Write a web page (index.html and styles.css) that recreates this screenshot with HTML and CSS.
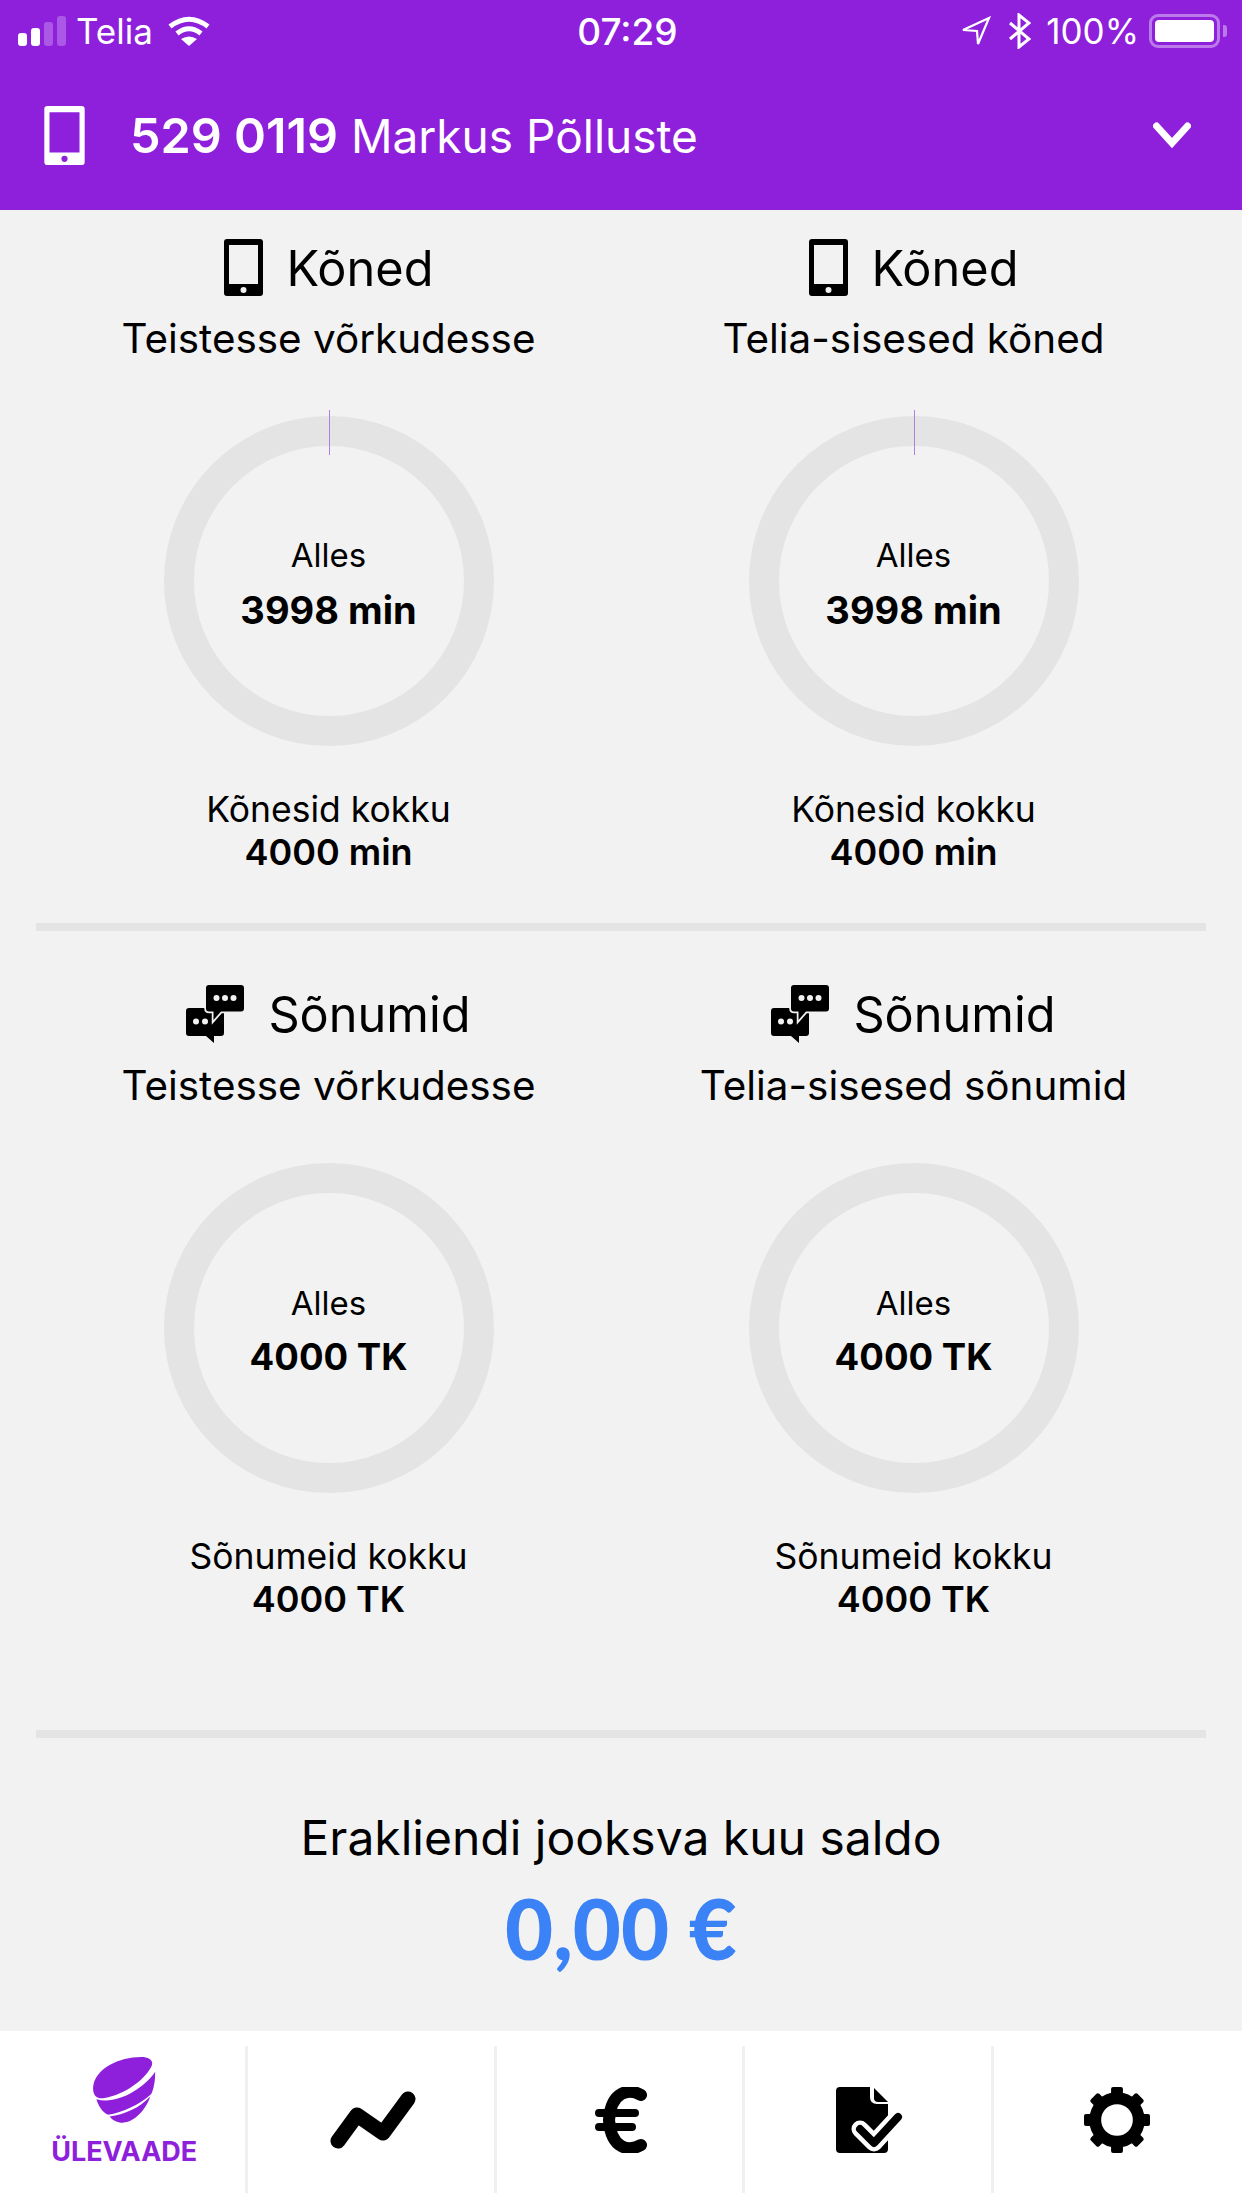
FILE: index.html
```html
<!DOCTYPE html>
<html lang="en">
<head>
  <meta charset="UTF-8" />
  <meta name="viewport" content="width=device-width, initial-scale=1" />
  <title>Ülevaade</title>
  <link rel="stylesheet" href="styles.css">
</head>
<body>
  <svg class="defs" width="0" height="0">
    <symbol id="phone" viewBox="0 0 39 57">
      <path fill-rule="evenodd" d="M3 0H36Q39 0 39 3V54Q39 57 36 57H3Q0 57 0 54V3Q0 0 3 0ZM5 6V45H34V6ZM19.500 48A3 3 0 1 0 19.500 54A3 3 0 1 0 19.500 48Z"/>
    </symbol>
    <symbol id="chat" viewBox="0 0 58 58">
      <path d="M3 23H35Q38 23 38 26V48Q38 51 35 51H28V58L20 51H3Q0 51 0 48V26Q0 23 3 23Z"/>
      <path d="M23 0H55Q58 0 58 3V23.500Q58 26.500 55 26.500H35L27.500 35V26.500H23Q20 26.500 20 23.500V3Q20 0 23 0Z" stroke="#f2f2f2" stroke-width="3.500" paint-order="stroke"/>
      <g fill="#f2f2f2">
        <circle cx="30.500" cy="13" r="3"/><circle cx="39" cy="13" r="3"/><circle cx="47.500" cy="13" r="3"/>
        <circle cx="10" cy="36.500" r="3"/><circle cx="19" cy="36.500" r="3"/>
      </g>
    </symbol>
  </svg>

  <header class="top">
    <div class="status">
      <div class="status-left">
        <div class="signal">
          <span class="bar b1"></span><span class="bar b2"></span><span class="bar b3 dim"></span><span class="bar b4 dim"></span>
        </div>
        <span class="carrier">Telia</span>
        <svg class="wifi" width="42" height="30" viewBox="0 0 42 30" fill="none" stroke="#fff">
          <path d="M2 10.500Q21 -4 40 10.500" stroke-width="5"/>
          <path d="M9 17.500Q21 8 33 17.500" stroke-width="5"/>
          <path d="M21 30L13 23Q21 18 29 23Z" fill="#fff" stroke="none"/>
        </svg>
      </div>
      <div class="clock">07:29</div>
      <div class="status-right">
        <svg class="loc" width="30" height="30" viewBox="0 0 30 30" fill="none" stroke="#fff" stroke-width="2.200">
          <path d="M2 14L28 2L17 28L16 15Z"/>
        </svg>
        <svg class="bt" width="22" height="36" viewBox="0 0 22 36" fill="none" stroke="#fff" stroke-width="3">
          <path d="M1 10L20 26L10 34V2L20 10L1 26"/>
        </svg>
        <span class="pct">100%</span>
        <div class="battery"><span class="cell"></span></div>
        <span class="nub"></span>
      </div>
    </div>
    <div class="account">
      <svg class="account-icon" width="41" height="59" fill="#fff"><use href="#phone"/></svg>
      <div class="account-name"><b>529 0119</b> Markus Põlluste</div>
      <svg class="chevron" width="38" height="27" viewBox="0 0 38 27" fill="none" stroke="#fff" stroke-width="7" stroke-linecap="round" stroke-linejoin="miter">
        <path d="M3.500 4L19 21L34.500 4"/>
      </svg>
    </div>
  </header>

  <main class="content">
    <section class="usage first">
      <div class="meter">
        <h2 class="meter-title"><svg width="39" height="57"><use href="#phone"/></svg>Kõned</h2>
        <p class="meter-sub">Teistesse võrkudesse</p>
        <div class="ring">
          <span class="tick"></span>
          <span class="left-label">Alles</span>
          <span class="left-value">3998 min</span>
        </div>
        <p class="total-label">Kõnesid kokku</p>
        <p class="total-value">4000 min</p>
      </div>
      <div class="meter">
        <h2 class="meter-title"><svg width="39" height="57"><use href="#phone"/></svg>Kõned</h2>
        <p class="meter-sub">Telia-sisesed kõned</p>
        <div class="ring">
          <span class="tick"></span>
          <span class="left-label">Alles</span>
          <span class="left-value">3998 min</span>
        </div>
        <p class="total-label">Kõnesid kokku</p>
        <p class="total-value">4000 min</p>
      </div>
    </section>

    <section class="usage">
      <div class="meter">
        <h2 class="meter-title"><svg width="58" height="58"><use href="#chat"/></svg>Sõnumid</h2>
        <p class="meter-sub">Teistesse võrkudesse</p>
        <div class="ring">
          <span class="left-label">Alles</span>
          <span class="left-value tk">4000 TK</span>
        </div>
        <p class="total-label">Sõnumeid kokku</p>
        <p class="total-value">4000 TK</p>
      </div>
      <div class="meter">
        <h2 class="meter-title"><svg width="58" height="58"><use href="#chat"/></svg>Sõnumid</h2>
        <p class="meter-sub">Telia-sisesed sõnumid</p>
        <div class="ring">
          <span class="left-label">Alles</span>
          <span class="left-value tk">4000 TK</span>
        </div>
        <p class="total-label">Sõnumeid kokku</p>
        <p class="total-value">4000 TK</p>
      </div>
    </section>

    <section class="balance">
      <p class="balance-label">Erakliendi jooksva kuu saldo</p>
      <p class="balance-value">0,00 €</p>
    </section>
  </main>

  <nav class="tabs">
    <div class="tab active">
      <svg width="63" height="66" viewBox="280 80 190 200" fill="#8e20dc">
        <path d="M280 170C285 115 360 80 425 80C450 80 462 90 458 105C445 140 380 195 310 205C290 207 278 195 280 170Z"/>
        <path d="M290 208C350 225 430 180 468 125C468 150 465 175 456 192C420 225 370 248 325 255C305 245 295 225 290 208Z"/>
        <path d="M330 260C375 255 420 235 453 200C440 240 405 278 370 279C352 279 340 272 330 260Z"/>
      </svg>
      <span class="tab-label">ÜLEVAADE</span>
    </div>
    <div class="tab">
      <svg width="86" height="58" viewBox="0 0 86 58" fill="none" stroke="#000" stroke-width="15" stroke-linecap="round" stroke-linejoin="round">
        <path d="M8 50L27 24L53 42L78 8"/>
      </svg>
    </div>
    <div class="tab">
      <svg width="52" height="66" viewBox="0 0 52 66" fill="none" stroke="#000" stroke-linecap="round">
        <path d="M46 8C34 1 16 4 14 33C16 62 34 65 46 58" stroke-width="12"/>
        <path d="M4 26H40M4 40H37" stroke-width="8"/>
      </svg>
    </div>
    <div class="tab">
      <svg width="67" height="66" viewBox="0 0 67 66" fill="none">
        <path fill="#000" d="M4 0H34V10Q34 17 41 17H52V62Q52 66 48 66H4Q0 66 0 62V4Q0 0 4 0Z"/>
        <path fill="#000" d="M38 1L52 15H42Q38 15 38 11Z"/>
        <path d="M24 42L38 56L62 30" stroke="#fff" stroke-width="17" stroke-linecap="round" stroke-linejoin="round"/>
        <path d="M24 42L38 56L62 30" stroke="#000" stroke-width="8" stroke-linecap="round" stroke-linejoin="round"/>
      </svg>
    </div>
    <div class="tab">
      <svg width="66" height="66" viewBox="0 0 100 100">
        <circle cx="50" cy="50" r="33" fill="none" stroke="#000" stroke-width="18"/>
        <g fill="#000">
          <rect x="41" y="0" width="18" height="20" rx="3"/>
          <rect x="41" y="0" width="18" height="20" rx="3" transform="rotate(45 50 50)"/>
          <rect x="41" y="0" width="18" height="20" rx="3" transform="rotate(90 50 50)"/>
          <rect x="41" y="0" width="18" height="20" rx="3" transform="rotate(135 50 50)"/>
          <rect x="41" y="0" width="18" height="20" rx="3" transform="rotate(180 50 50)"/>
          <rect x="41" y="0" width="18" height="20" rx="3" transform="rotate(225 50 50)"/>
          <rect x="41" y="0" width="18" height="20" rx="3" transform="rotate(270 50 50)"/>
          <rect x="41" y="0" width="18" height="20" rx="3" transform="rotate(315 50 50)"/>
        </g>
      </svg>
    </div>
  </nav>
</body>
</html>
```

FILE: styles.css
```css
* {
  box-sizing: border-box;
}

body {
  margin: 0;
  width: 1242px;
  height: 2208px;
  display: flex;
  flex-direction: column;
  font-family: 'Inter', 'Liberation Sans', sans-serif;
  background: #f2f2f2;
  color: #000;
  overflow: hidden;
}

.defs {
  position: absolute;
}

p,
h2 {
  margin: 0;
}

.top {
  height: 210px;
  background: #8e20dc;
  color: #fff;
  flex-shrink: 0;
}

.status {
  height: 62px;
  display: grid;
  grid-template-columns: 1fr auto 1fr;
  align-items: center;
  padding: 0 15px 0 18px;
  font-size: 35px;
}

.status-left,
.status-right {
  display: flex;
  align-items: center;
}

.status-right {
  justify-content: flex-end;
}

.signal {
  display: flex;
  align-items: flex-end;
  gap: 4px;
  height: 30px;
}

.bar {
  width: 9px;
  background: #fff;
  border-radius: 3px;
}

.bar.dim {
  opacity: 0.25;
}

.b1 { height: 13px; }
.b2 { height: 18px; }
.b3 { height: 24px; }
.b4 { height: 30px; }

.carrier {
  margin-left: 10px;
}

.wifi {
  margin-left: 15px;
}

.clock {
  font-size: 37px;
  font-weight: 500;
  margin-left: 10px;
}

.bt {
  margin-left: 18px;
}

.pct {
  margin-left: 15px;
}

.battery {
  margin-left: 10px;
  width: 71px;
  height: 34px;
  border: 3px solid rgba(255, 255, 255, 0.4);
  border-radius: 9px;
  padding: 3px;
}

.cell {
  display: block;
  height: 100%;
  background: #fff;
  border-radius: 4px;
}

.nub {
  width: 4px;
  height: 12px;
  margin-left: 3px;
  background: rgba(255, 255, 255, 0.4);
  border-radius: 0 3px 3px 0;
}

.account {
  height: 146px;
  display: flex;
  align-items: center;
  padding: 0 51px 0 44px;
}

.account-name {
  margin-left: 45px;
  flex: 1;
  font-size: 46px;
}

.account-name b {
  font-size: 48.500px;
  font-weight: 600;
}

.content {
  flex: 1;
}

.usage {
  margin: 0 36px;
  display: grid;
  grid-template-columns: 1fr 1fr;
  height: 807px;
  padding-top: 54px;
  border-bottom: 8px solid #e4e4e4;
}

.usage.first {
  height: 721px;
  padding-top: 28px;
}

.meter {
  display: flex;
  flex-direction: column;
  align-items: center;
}

.meter-title {
  display: flex;
  align-items: center;
  gap: 24px;
  height: 58px;
  font-size: 48.700px;
  font-weight: 400;
}

.first .meter-title {
  padding-top: 3px;
}

.first .meter-title svg {
  margin-top: -3px;
}

.meter-sub {
  margin-top: 19px;
  font-size: 40.400px;
  line-height: 48px;
}

.ring {
  position: relative;
  width: 330px;
  height: 330px;
  margin-top: 53px;
  padding-top: 7px;
  border: 30px solid #e4e4e4;
  border-radius: 50%;
  display: flex;
  flex-direction: column;
  align-items: center;
  justify-content: center;
}

.tick {
  position: absolute;
  top: -36px;
  left: 50%;
  width: 1px;
  height: 45px;
  background: #b07fe0;
}

.left-label {
  font-size: 33px;
  line-height: 40px;
}

.left-value {
  margin-top: 11px;
  font-size: 38px;
  line-height: 48px;
  font-weight: 700;
}

.left-value.tk {
  margin-top: 10px;
  font-size: 36.500px;
}

.total-label {
  margin-top: 43px;
  font-size: 35.500px;
  line-height: 42px;
}

.total-value {
  font-size: 36px;
  line-height: 42px;
  font-weight: 600;
}

.balance {
  text-align: center;
  padding-top: 70px;
}

.balance-label {
  font-size: 48px;
  line-height: 60px;
}

.balance-value {
  margin-top: 10px;
  font-family: 'Lato', 'Liberation Sans', sans-serif;
  font-size: 83px;
  line-height: 100px;
  font-weight: 900;
  color: #3b82f6;
}

.tabs {
  height: 177px;
  flex-shrink: 0;
  background: #fff;
  display: grid;
  grid-template-columns: repeat(5, 1fr);
  padding: 15px 0;
}

.tab {
  display: flex;
  flex-direction: column;
  align-items: center;
  justify-content: center;
  padding-left: 3px;
  border-right: 3px solid #f0f0f0;
}

.tab:last-child {
  padding-left: 0;
  padding-right: 2px;
  border-right: none;
}

.tab.active {
  justify-content: flex-start;
  padding-top: 11px;
}

.tab-label {
  margin-top: 12px;
  font-size: 27px;
  font-weight: 700;
  color: #8e20dc;
}
```
